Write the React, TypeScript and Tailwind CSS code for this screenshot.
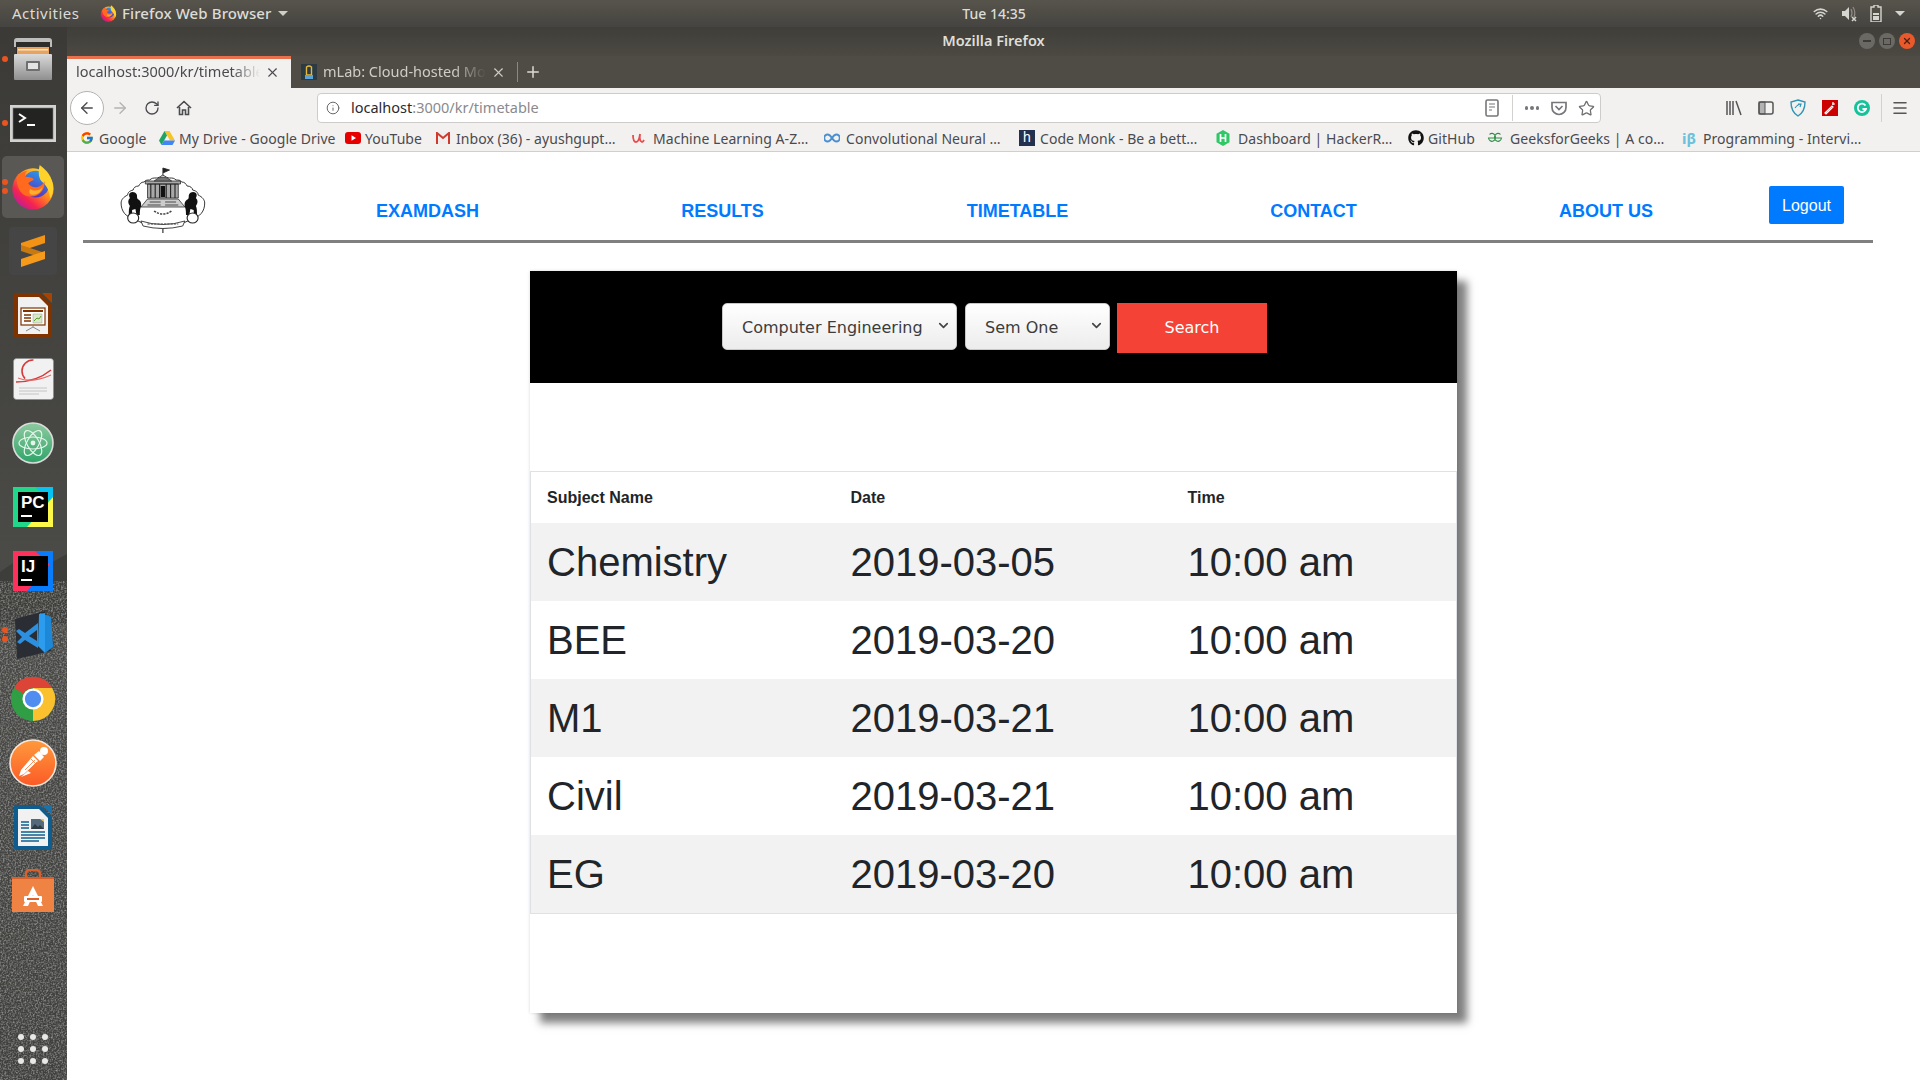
import React from "react";
import { ArrowLeft, ArrowRight, RotateCw, Info, X, Plus, ChevronDown, Star, Wifi, Menu } from "lucide-react";
import { FcGoogle } from "react-icons/fc";
import { FaGithub } from "react-icons/fa";

const Firefox = ({ s }: { s: number }) => (
  <svg width={s} height={s} viewBox="0 0 48 48">
    <defs>
      <linearGradient id="ffa" x1="0.9" y1="0.1" x2="0.2" y2="0.9">
        <stop offset="0" stopColor="#ffdf2e" />
        <stop offset="0.45" stopColor="#ff8a1c" />
        <stop offset="0.8" stopColor="#f5244f" />
        <stop offset="1" stopColor="#c91d8e" />
      </linearGradient>
      <linearGradient id="ffb" x1="0.7" y1="0" x2="0.3" y2="1">
        <stop offset="0" stopColor="#2a9be8" />
        <stop offset="1" stopColor="#5a2bc2" />
      </linearGradient>
    </defs>
    <circle cx="24" cy="26" r="21.5" fill="url(#ffa)" />
    <circle cx="27" cy="21" r="14" fill="url(#ffb)" />
    <path d="M31 1c7 5 14 13 14 24 0 5-1 8-3 11-1-7-3-13-8-17-4-3-5-10-3-18z" fill="#ffd12b" />
    <path d="M7 14c2-4 6-6 11-7-2 2-3 4-2 6 3 1 6 0 9 3-2 2-4 2-6 4 2 3 6 5 10 4 4-1 6-4 7-6 1 8-5 16-14 16-9 0-15-7-15-20z" fill="#ff6a1f" />
    <path d="M21 26c4 3 10 2 13-2-1 5-5 8-10 8-3 0-5-2-3-6z" fill="#ffb02a" />
  </svg>
);

const Cabinet = () => (
  <svg width="42" height="44" viewBox="0 0 42 44">
    <defs>
      <linearGradient id="cab" x1="0" y1="0" x2="0" y2="1">
        <stop offset="0" stopColor="#dadada" />
        <stop offset="1" stopColor="#8f8f8f" />
      </linearGradient>
    </defs>
    <path d="M2 4q0-3 3-3h32q3 0 3 3v6H2z" fill="#bdbdbd" />
    <rect x="4" y="5" width="34" height="12" fill="#2e2c2a" />
    <rect x="5" y="10" width="32" height="7" fill="#e8a25e" />
    <rect x="6" y="12" width="30" height="1.5" fill="#f7e4c8" />
    <rect x="2" y="17" width="38" height="26" rx="1" fill="url(#cab)" />
    <rect x="14" y="24" width="14" height="10" rx="1" fill="#6f6f6f" />
    <rect x="16" y="26" width="10" height="6" fill="#e4e4e4" />
  </svg>
);

const Terminal = () => (
  <svg width="46" height="37" viewBox="0 0 46 37">
    <rect width="46" height="37" fill="#d2d2d0" />
    <rect x="3" y="3" width="40" height="31" fill="#232322" stroke="#7c7c7c" strokeWidth="0.6" />
    <path d="M9 9l6 4-6 4" fill="none" stroke="#fff" strokeWidth="2" />
    <rect x="17" y="19" width="8" height="2" fill="#fff" />
  </svg>
);

const Sublime = () => (
  <div className="w-[48px] h-[48px] rounded-[4px] bg-[#454545] flex items-center justify-center">
    <svg width="24" height="32" viewBox="0 0 24 32">
      <path d="M24 0v8L0 16V8z" fill="#f39316" />
      <path d="M0 10l24 8v6L0 16z" fill="#c87a10" />
      <path d="M24 16v8L0 32v-8z" fill="#f59a1a" />
    </svg>
  </div>
);

const Office = ({ edge, corner, kind }: { edge: string; corner: string; kind: "impress" | "writer" }) => (
  <svg width="40" height="47" viewBox="0 0 40 47">
    <path d="M2 1h25l12 12v31q0 2-2 2H3q-2 0-2-2V2q0-1 1-1z" fill={edge} />
    <path d="M29 1h9q1 0 1 1v9z" fill={corner} />
    <path d="M5 5h21l9 9v28H5z" fill="#f1f1f1" />
    {kind === "impress" ? (
      <g>
        <rect x="8" y="16" width="24" height="17" fill="#fff" stroke={edge} strokeWidth="1.2" />
        <rect x="10" y="18" width="20" height="2" fill={edge} />
        <path d="M11 23h7M11 26h7M11 29h7" stroke={edge} strokeWidth="1.5" />
        <rect x="20" y="22" width="9" height="9" fill="#d9e8c9" stroke="#999" strokeWidth="0.5" />
        <path d="M21 29l3-3 2 1 2-3" stroke="#5a9a30" fill="none" />
        <path d="M20 33v2M13 39l7-4 7 4" stroke="#888" fill="none" />
      </g>
    ) : (
      <g>
        <path d="M8 18h8M8 21h8M8 24h8" stroke={edge} strokeWidth="1.6" />
        <rect x="18" y="15" width="13" height="10" fill="#53687a" />
        <path d="M18 25l4-5 3 3 2-2 4 4z" fill="#2e3a44" />
        <path d="M27 15h4v3z" fill="#e7c94a" />
        <path d="M8 28h24M8 31h24M8 34h24M8 37h18" stroke={edge} strokeWidth="1.6" />
      </g>
    )}
  </svg>
);

const Evince = () => (
  <svg width="41" height="42" viewBox="0 0 41 42">
    <rect x="0.5" y="0.5" width="40" height="41" rx="3" fill="#f1f1f1" stroke="#8a8a8a" strokeWidth="0.6" />
    <circle cx="20" cy="13" r="11" fill="none" stroke="#d43a3a" strokeWidth="1.6" strokeDasharray="26 40" strokeDashoffset="40" />
    <path d="M3 24c10 0 24-3 35-12" fill="none" stroke="#d43a3a" strokeWidth="1.6" />
    <path d="M5 20c10 4 22 2 33-3" fill="none" stroke="#e46a6a" strokeWidth="1.2" />
    <path d="M6 30h28M6 33h28M6 36h20" stroke="#c4c4c4" strokeWidth="1" />
  </svg>
);

const Atom = () => (
  <svg width="42" height="42" viewBox="0 0 42 42">
    <defs>
      <linearGradient id="atm" x1="0" y1="0" x2="0" y2="1">
        <stop offset="0" stopColor="#8ecaa0" />
        <stop offset="1" stopColor="#2fa468" />
      </linearGradient>
    </defs>
    <circle cx="21" cy="21" r="20" fill="url(#atm)" stroke="#dcdcdc" strokeWidth="1.6" />
    <g fill="none" stroke="#e6f5ea" strokeWidth="1.2">
      <ellipse cx="21" cy="21" rx="6" ry="14" transform="rotate(30 21 21)" />
      <ellipse cx="21" cy="21" rx="6" ry="14" transform="rotate(-30 21 21)" />
      <ellipse cx="21" cy="21" rx="6" ry="14" transform="rotate(90 21 21)" />
    </g>
    <circle cx="21" cy="21" r="2.4" fill="#e6f5ea" />
  </svg>
);

const JetBrains = ({ t, a, b, c }: { t: string; a: string; b: string; c: string }) => (
  <div className="relative w-[40px] h-[40px] overflow-hidden">
    <svg width="40" height="40" viewBox="0 0 40 40" className="absolute inset-0">
      <rect width="40" height="40" fill={a} />
      <path d="M22 0h18v16z" fill={b} />
      <path d="M40 10v30H14z" fill={c} />
    </svg>
    <div className="absolute left-[5px] top-[5px] w-[30px] h-[30px] bg-black">
      <div className="text-white font-bold text-[17px] leading-[17px] pl-[3px] pt-[2px] font-['Liberation_Sans',sans-serif]">{t}</div>
      <div className="w-[11px] h-[2px] bg-white ml-[3px] mt-[4px]" />
    </div>
  </div>
);

const VSCode = () => (
  <svg width="42" height="50" viewBox="0 0 42 50">
    <path d="M3 9l30-8 6 40-34 8z" fill="#2a2d33" />
    <path d="M28 3l11 4 2 30-8 6z" fill="#1e88d8" />
    <path d="M27 4l-1 32 7 7V3z" fill="#2c9cee" />
    <path d="M26 13l-13 10-6-4-3 2 6 6-5 5 3 2 5-4 13 8z M25 20v11l-8-5z" fill="#2d8fe0" fillRule="evenodd" />
  </svg>
);

const Chrome = () => (
  <svg width="46" height="46" viewBox="0 0 48 48">
    <circle cx="24" cy="24" r="23" fill="#2f9e44" />
    <path d="M24 47A23 23 0 0 0 44 12.5H24z M24 47l10-18-10-5z" fill="#fbc02d" />
    <path d="M4 12.5A23 23 0 0 1 44 12.5H24a11.500 11.500 0 0 0-10 6z" fill="#db4437" />
    <path d="M4 12.500L14 29l10-5-10-5.500z" fill="#2f9e44" />
    <circle cx="24" cy="24" r="11" fill="#fff" />
    <circle cx="24" cy="24" r="8.500" fill="#4f8ef0" />
  </svg>
);

const Postman = () => (
  <svg width="48" height="48" viewBox="0 0 48 48">
    <defs>
      <linearGradient id="pst" x1="0" y1="0" x2="0" y2="1">
        <stop offset="0" stopColor="#ff9a3c" />
        <stop offset="1" stopColor="#fb5a26" />
      </linearGradient>
    </defs>
    <circle cx="24" cy="24" r="23" fill="url(#pst)" stroke="#f6e8de" strokeWidth="1.600" />
    <path d="M10 37l5-2 14-13-5-5-12 14z" fill="#fff" />
    <path d="M12 38l10-4-3-2z" fill="#fff" />
    <circle cx="35" cy="12" r="4" fill="#fff" />
    <path d="M25 16l5-4 5 6-4 4z" fill="#fff" />
    <path d="M16 31l10-10M19 32l9-9M22 20l5 5" stroke="#f4793a" strokeWidth="0.800" />
  </svg>
);

const Bag = () => (
  <svg width="42" height="45" viewBox="0 0 42 45">
    <path d="M14 10V5q0-4 4-4h6q4 0 4 4v5" fill="none" stroke="#d8602a" strokeWidth="2.500" />
    <rect y="8" width="42" height="35" fill="#ee8343" />
    <rect y="8" width="42" height="2" fill="#d8602a" />
    <path d="M21 17l-10 20h5l5-11 5 11h5z" fill="#fff" />
    <rect x="12" y="27" width="18" height="6" rx="1" fill="#fff" />
    <rect x="15" y="29" width="12" height="2" fill="#e2612a" />
  </svg>
);

const Seal = () => (
  <svg width="88" height="66" viewBox="5 0 80 66" preserveAspectRatio="none">
    <path d="M44 8c3 2 4 3 6 3 3 0 4 0 6 2 2 0 4 0 5 2 3 0 4 2 5 4 3 0 5 2 5 4 4 1 5 3 5 5 4 2 6 5 6 8 0 8-4 14-12 16-8 5-18 9-26 9s-18-4-26-9C10 50 6 44 6 36c0-3 2-6 6-8 0-2 1-4 5-5 0-2 2-4 5-4 1-2 2-4 5-4 1-2 3-2 5-2 2-2 3-2 6-2 2 0 3-1 6-3z" fill="#fff" stroke="#2a2a2a" strokeWidth="0.9" />
    <path d="M44 8V1M44 1l6 2-6 3" stroke="#222" fill="#222" strokeWidth="0.800" />
    <path d="M28 14h32v3H28zM30 17h28v14H30z" fill="#a8a8a8" stroke="#222" strokeWidth="0.700" />
    <path d="M33 17v14M37 17v14M41 17v14M47 17v14M51 17v14M55 17v14" stroke="#222" strokeWidth="1" />
    <path d="M36 14q8-8 16 0z" fill="#777" stroke="#222" strokeWidth="0.600" />
    <path d="M42 19h4v11h-4z" fill="#111" />
    <path d="M30 32h28l6 8H24z" fill="#ccc" stroke="#222" strokeWidth="0.700" />
    <path d="M32 35h10M46 35h10M30 38h12M46 38h12" stroke="#333" strokeWidth="0.800" />
    <path d="M14 26c2-2 5-1 6 1 1 2 0 3 1 5 2 1 4 3 3 8-1 2-1 6-1 8h-3l-1-6-3 1v5h-3c0-4 0-7 1-9-2-3-2-6 0-8-1-2-1-4 0-5z" fill="#111" />
    <path d="M74 26c-2-2-5-1-6 1-1 2 0 3-1 5-2 1-4 3-3 8 1 2 1 6 1 8h3l1-6 3 1v5h3c0-4 0-7-1-9 2-3 2-6 0-8 1-2 1-4 0-5z" fill="#111" />
    <circle cx="17" cy="51" r="5" fill="#fff" stroke="#222" strokeWidth="1" />
    <circle cx="71" cy="51" r="5" fill="#fff" stroke="#222" strokeWidth="1" />
    <path d="M24 54q20 7 40 0l-2 5q-18 5-36 0z" fill="#fff" stroke="#222" strokeWidth="0.800" />
    <path d="M30 57h28" stroke="#444" strokeWidth="1.200" strokeDasharray="2 1" />
    <path d="M36 44q8 6 16 0" fill="none" stroke="#444" strokeWidth="1.500" strokeDasharray="2 1" />
    <path d="M44 62v4" stroke="#222" strokeWidth="1" />
  </svg>
);

const Drive = () => (
  <svg width="16" height="15" viewBox="0 0 16 15">
    <path d="M5.500 0h5l5.500 9.500h-5z" fill="#f7c325" />
    <path d="M5.500 0L0 9.500 2.500 14l5.500-9.500z" fill="#1fa463" />
    <path d="M5 9.500h11L13.500 14h-11z" fill="#4285f4" />
  </svg>
);
const YT = () => (
  <svg width="16" height="12" viewBox="0 0 16 12">
    <rect width="16" height="12" rx="3" fill="#e60000" />
    <path d="M6.500 3.200v5.600L11 6z" fill="#fff" />
  </svg>
);
const Gmail = () => (
  <svg width="14" height="12" viewBox="0 0 14 12">
    <rect width="14" height="12" fill="#eee" />
    <path d="M1 12V1l6 5 6-5v11" fill="none" stroke="#d0392e" strokeWidth="2" />
  </svg>
);
const Udemy = () => (
  <svg width="13" height="13" viewBox="0 0 13 13">
    <path d="M1 3q0 7 3 7 3 0 4-8M8 2q-1 7 2 8 1 0 2-2" fill="none" stroke="#e84c4c" strokeWidth="1.800" />
  </svg>
);
const Infinity2 = () => (
  <svg width="16" height="10" viewBox="0 0 16 10">
    <path d="M8 5C6 2 5 1.500 3.700 1.500a3.500 3.500 0 0 0 0 7C5 8.500 6 8 8 5c2-3 3-3.500 4.300-3.500a3.500 3.500 0 0 1 0 7C11 8.500 10 8 8 5z" fill="none" stroke="#4a8fd0" strokeWidth="2" />
  </svg>
);
const CM = () => (
  <div className="w-[16px] h-[16px] bg-[#23304f] text-white text-[14px] leading-[14px] text-center font-['Liberation_Sans',sans-serif]">h</div>
);
const HR = () => (
  <svg width="16" height="16" viewBox="0 0 16 16">
    <path d="M8 0l6.500 3.700v8.600L8 16l-6.500-3.700V3.700z" fill="#2ec866" />
    <path d="M5.500 4v8M10.500 4v8M5.500 8h5" stroke="#fff" strokeWidth="1.700" />
  </svg>
);
const GFG = () => (
  <svg width="16" height="12" viewBox="0 0 16 12">
    <path d="M8 6H1.500a3.500 4 0 1 0 1-3.500M8 6h6.500a3.500 4 0 1 1-1-3.500" fill="none" stroke="#2f8d46" strokeWidth="1.100" />
  </svg>
);
const IB = () => <span className="text-[#6cc0dc] text-[15px] font-bold w-[16px] font-['Noto_Sans',sans-serif]">iβ</span>;

const bookmarks = [
  { w: "w-[79px]", icon: <FcGoogle size={14} />, t: "Google", g: "gap-[5px]" },
  { w: "w-[186px]", icon: <Drive />, t: "My Drive - Google Drive", g: "gap-[4px]" },
  { w: "w-[91px]", icon: <YT />, t: "YouTube", g: "gap-[4px]" },
  { w: "w-[196px]", icon: <Gmail />, t: "Inbox (36) - ayushgupt…", g: "gap-[6px]" },
  { w: "w-[192px]", icon: <Udemy />, t: "Machine Learning A-Z…", g: "gap-[8px]" },
  { w: "w-[195px]", icon: <Infinity2 />, t: "Convolutional Neural …", g: "gap-[6px]" },
  { w: "w-[196px]", icon: <CM />, t: "Code Monk - Be a bett…", g: "gap-[5px]" },
  { w: "w-[193px]", icon: <HR />, t: "Dashboard | HackerR…", g: "gap-[7px]" },
  { w: "w-[79px]", icon: <FaGithub size={16} color="#111" />, t: "GitHub", g: "gap-[4px]" },
  { w: "w-[195px]", icon: <GFG />, t: "GeeksforGeeks | A co…", g: "gap-[7px]" },
  { w: "w-[190px]", icon: <IB />, t: "Programming - Intervi…", g: "gap-[5px]" },
];

const dock: { el: React.ReactNode; dots?: number; active?: boolean }[] = [
  { el: <Cabinet />, dots: 1 },
  { el: <Terminal />, dots: 1 },
  { el: <Firefox s={46} />, dots: 2, active: true },
  { el: <Sublime /> },
  { el: <Office edge="#7f3300" corner="#a84400" kind="impress" /> },
  { el: <Evince /> },
  { el: <Atom /> },
  { el: <JetBrains t="PC" a="#21d789" b="#07c3f2" c="#fcf84a" /> },
  { el: <JetBrains t="IJ" a="#fe315d" b="#087cfa" c="#087cfa" /> },
  { el: <VSCode />, dots: 2 },
  { el: <Chrome /> },
  { el: <Postman /> },
  { el: <Office edge="#0f5d8f" corner="#1a72ab" kind="writer" /> },
  { el: <Bag /> },
];

const rows = [
  ["Chemistry", "2019-03-05", "10:00 am"],
  ["BEE", "2019-03-20", "10:00 am"],
  ["M1", "2019-03-21", "10:00 am"],
  ["Civil", "2019-03-21", "10:00 am"],
  ["EG", "2019-03-20", "10:00 am"],
];

const nav = [
  { t: "EXAMDASH", w: "w-[295px]" },
  { t: "RESULTS", w: "w-[295px]" },
  { t: "TIMETABLE", w: "w-[295px]" },
  { t: "CONTACT", w: "w-[297px]" },
  { t: "ABOUT US", w: "w-[288px]" },
];

const ui = "font-['Noto_Sans',sans-serif]";

export default function App() {
  return (
    <div className="w-[1920px] h-[1080px] overflow-hidden bg-white flex flex-col font-['Liberation_Sans',sans-serif]">
      {/* GNOME top bar */}
      <div className={`h-[27px] shrink-0 flex items-center bg-gradient-to-b from-[#57544c] to-[#464440] text-[15px] text-[#dcdcd6] ${ui}`}>
        <div className="w-[954px] flex items-center pl-[12px]">
          <span className="w-[88px] tracking-[0.500px]">Activities</span>
          <Firefox s={17} />
          <span className="ml-[5px] font-medium tracking-[0.100px]">Firefox Web Browser</span>
          <span className="ml-[6px] w-0 h-0 border-x-[5px] border-x-transparent border-t-[5px] border-t-[#cfcfc8]" />
        </div>
        <div className="w-[80px] text-center text-[14px] font-medium">Tue 14:35</div>
        <div className="flex-1 flex items-center justify-end pr-[15px] gap-[13px] text-[#d5d5cf]">
          <Wifi size={15} strokeWidth={2.500} />
          <svg width="16" height="17" viewBox="0 0 16 17">
            <path d="M1 6h3l4-4v13l-4-4H1z" fill="#d5d5cf" />
            <path d="M10 4q2 4 0 8M12 2q3 5 1 10" fill="none" stroke="#8f8d86" strokeWidth="1.200" />
            <path d="M11 12l4 4M15 12l-4 4" stroke="#d5d5cf" strokeWidth="1.500" />
          </svg>
          <svg width="12" height="17" viewBox="0 0 12 17">
            <path d="M4 0h4v2h3v15H1V2h3z" fill="none" stroke="#d5d5cf" strokeWidth="1.400" />
            <rect x="3" y="8" width="6" height="2" fill="#d5d5cf" />
            <rect x="3" y="11" width="6" height="4" fill="#d5d5cf" />
          </svg>
          <span className="w-0 h-0 border-x-[5px] border-x-transparent border-t-[5px] border-t-[#d5d5cf]" />
        </div>
      </div>

      <div className="flex-1 flex min-h-0">
        {/* Dock */}
        <div className="relative w-[67px] shrink-0 flex flex-col bg-gradient-to-b from-[#3b3a37] via-[#4a4a47] to-[#3f3f3d] overflow-hidden">
          <svg className="absolute left-0 top-[500px]" width="67" height="553" viewBox="0 0 67 553">
            <filter id="nz">
              <feTurbulence type="fractalNoise" baseFrequency="0.6" numOctaves="2" />
              <feColorMatrix values="0 0 0 0 0.5 0 0 0 0 0.5 0 0 0 0 0.5 0 0 0 1.400 -0.550" />
            </filter>
            <path d="M0 45l20-14 25 8 22-12v70H0z" fill="#33332f" opacity="0.55" />
            <rect y="100" width="67" height="453" filter="url(#nz)" />
          </svg>
          {dock.map((d, i) => (
            <div key={i} className="relative h-[64px] shrink-0 flex items-center justify-center pr-[1px]">
              {d.active && <div className="absolute left-[2px] top-[1px] w-[62px] h-[62px] rounded-[5px] bg-[#5a5855]" />}
              <div className="relative flex items-center justify-center">{d.el}</div>
              {d.dots === 1 && <span className="absolute left-[2px] top-[29px] w-[6px] h-[6px] rounded-full bg-[#e95420]" />}
              {d.dots === 2 && (
                <>
                  <span className="absolute left-[2px] top-[24px] w-[6px] h-[6px] rounded-full bg-[#e95420]" />
                  <span className="absolute left-[2px] top-[33px] w-[6px] h-[6px] rounded-full bg-[#e95420]" />
                </>
              )}
            </div>
          ))}
          <div className="relative mt-auto mb-[16px] ml-[18px] w-[30px] grid grid-cols-3 gap-[6px]">
            {Array.from({ length: 9 }).map((_, i) => (
              <span key={i} className="w-[6px] h-[6px] rounded-full bg-[#e8e8e6]" />
            ))}
          </div>
        </div>

        {/* Window */}
        <div className="flex-1 flex flex-col min-w-0">
          <div className={`h-[29px] shrink-0 flex items-center pb-[2px] bg-gradient-to-b from-[#403e39] to-[#4b4942] text-[14.500px] font-semibold text-[#dfdfd9] ${ui} relative`}>
            <div className="flex-1 text-center">Mozilla Firefox</div>
            <div className="absolute right-[5px] top-[6px] flex gap-[4px]">
              <span className="w-[16px] h-[16px] rounded-full bg-[#6b6963] flex items-center justify-center"><span className="w-[8px] h-[2px] bg-[#3c3b37]" /></span>
              <span className="w-[16px] h-[16px] rounded-full bg-[#6b6963] flex items-center justify-center"><span className="w-[8px] h-[7px] border border-[#3c3b37]" /></span>
              <span className="w-[16px] h-[16px] rounded-full bg-[#e9592b] flex items-center justify-center"><X size={10} color="#4a2010" strokeWidth={3} /></span>
            </div>
          </div>
          {/* Tabs */}
          <div className={`h-[32px] shrink-0 flex items-stretch bg-[#4f4c45] text-[14.500px] ${ui}`}>
            <div className="w-[224px] bg-[#f2f1f0] border-t-[3px] border-[#e9704d] flex items-center pl-[9px] pr-[11px] pb-[3px] text-[#4a4a4f]">
              <span className="flex-1 whitespace-nowrap overflow-hidden [mask-image:linear-gradient(to_right,black_85%,transparent)]">localhost:3000/kr/timetable</span>
              <X size={15} className="ml-[5px] shrink-0" strokeWidth={1.800} />
            </div>
            <div className="w-[226px] flex items-center pl-[10px] pr-[11px] text-[#cfcdc6]">
              <svg width="16" height="16" viewBox="0 0 16 16" className="shrink-0">
                <rect width="16" height="16" fill="#2c3a44" />
                <path d="M5.500 3q2.500-2 5 0v8h-5z" fill="none" stroke="#e5b83a" strokeWidth="1.400" />
                <rect x="4" y="11" width="8" height="4" fill="#5ba3d6" />
              </svg>
              <span className="ml-[6px] flex-1 whitespace-nowrap overflow-hidden [mask-image:linear-gradient(to_right,black_80%,transparent)]">mLab: Cloud-hosted MongoDB</span>
              <X size={15} className="ml-[5px] shrink-0" strokeWidth={1.800} />
            </div>
            <div className="w-px my-[6px] bg-[#8a8880]" />
            <div className="flex items-center pl-[6px] text-[#dcdad4]"><Plus size={18} /></div>
          </div>
          {/* Toolbar */}
          <div className="relative z-10 h-[35px] shrink-0 pt-[5px] flex items-center bg-[#f2f1f0] text-[#4a4a4f]">
            <div className="w-[34px] h-[34px] rounded-full border border-[#b5b3b0] bg-white flex items-center justify-center shrink-0 ml-[3px]">
              <ArrowLeft size={18} strokeWidth={1.800} />
            </div>
            <ArrowRight size={18} strokeWidth={1.800} className="ml-[7px] text-[#b4b3b1]" />
            <RotateCw size={16} strokeWidth={2} className="ml-[15px]" />
            <svg width="16" height="16" viewBox="0 0 16 16" className="ml-[16px]">
              <path d="M1 8l7-6.500L15 8M3.500 7v7.500h3V10h3v4.500h3V7" fill="none" stroke="#4a4a4f" strokeWidth="1.600" />
            </svg>
            <div className={`ml-[125px] w-[1284px] h-[30px] shrink-0 bg-white border border-[#cdccca] rounded-[4px] flex items-center text-[14.500px] ${ui}`}>
              <Info size={14} className="ml-[8px] shrink-0" strokeWidth={1.700} color="#666" />
              <span className="ml-[11px] text-[#2a2a2e]">localhost</span>
              <span className="text-[#8a8a8c]">:3000/kr/timetable</span>
              <div className="ml-auto flex items-center">
                <svg width="14" height="18" viewBox="0 0 14 18">
                  <rect x="1" y="1" width="12" height="16" rx="1.500" fill="none" stroke="#77767a" strokeWidth="1.600" />
                  <path d="M4 5h6M4 8h6M4 11h3" stroke="#77767a" strokeWidth="1.200" />
                </svg>
                <div className="w-px h-[26px] bg-[#d2d1cf] ml-[13px]" />
                <span className="ml-[12px] flex gap-[2px]">
                  <span className="w-[3.500px] h-[3.500px] rounded-full bg-[#77767a]" />
                  <span className="w-[3.500px] h-[3.500px] rounded-full bg-[#77767a]" />
                  <span className="w-[3.500px] h-[3.500px] rounded-full bg-[#77767a]" />
                </span>
                <svg width="16" height="15" viewBox="0 0 16 15" className="ml-[12px]">
                  <path d="M1 1.500h14v5a7 7 0 0 1-14 0z" fill="none" stroke="#77767a" strokeWidth="1.700" />
                  <path d="M4.500 5L8 8.500 11.500 5" fill="none" stroke="#77767a" strokeWidth="1.700" />
                </svg>
                <Star size={17} className="ml-[11px] mr-[5px]" strokeWidth={1.800} color="#6f6e72" />
              </div>
            </div>
            <div className="flex items-center ml-[125px]">
              <svg width="16" height="16" viewBox="0 0 16 16">
                <path d="M1 1v14M4 1v14M7 1v14M10 1l5 14" stroke="#555" strokeWidth="1.500" />
              </svg>
              <svg width="16" height="14" viewBox="0 0 16 14" className="ml-[16px]">
                <rect x="1" y="1" width="14" height="12" rx="2" fill="none" stroke="#555" strokeWidth="1.500" />
                <rect x="1" y="1" width="6" height="12" fill="#555" fillOpacity="0.4" stroke="#555" />
              </svg>
              <svg width="16" height="18" viewBox="0 0 16 18" className="ml-[16px]">
                <path d="M8 1l7 2c0 7-2 11-7 14C3 14 1 10 1 3z" fill="none" stroke="#2f94b5" strokeWidth="1.400" />
                <path d="M5 9q3-4 6-4M8 5l3 0-1 3" fill="none" stroke="#2f94b5" strokeWidth="1.200" />
              </svg>
              <svg width="16" height="16" viewBox="0 0 16 16" className="ml-[16px]">
                <rect width="16" height="16" fill="#cc0000" />
                <path d="M3 13l7-7 1 1-7 7zM11 2v3M13 4h-3" stroke="#fff" strokeWidth="1.200" />
              </svg>
              <svg width="16" height="16" viewBox="0 0 16 16" className="ml-[16px]">
                <circle cx="8" cy="8" r="8" fill="#15c39a" />
                <path d="M11.500 5.500A4.200 4.200 0 1 0 12 9H8.500" fill="none" stroke="#fff" strokeWidth="1.800" />
              </svg>
              <div className="w-px h-[28px] bg-[#d2d1cf] ml-[11px]" />
              <Menu size={18} className="ml-[9px]" strokeWidth={2} color="#555" />
            </div>
          </div>
          {/* Bookmarks */}
          <div className={`h-[29px] shrink-0 flex items-center pt-[2px] bg-[#f2f1f0] border-b border-[#d0cfcd] pl-[13px] text-[14px] text-[#4a4a4f] ${ui}`}>
            {bookmarks.map((b, i) => (
              <div key={i} className={`${b.w} shrink-0 flex items-center ${b.g} whitespace-nowrap overflow-hidden`}>
                <span className="shrink-0 flex items-center">{b.icon}</span>
                <span className="tracking-[0.050px]">{b.t}</span>
              </div>
            ))}
          </div>
          {/* Page */}
          <div className="flex-1 min-h-0 bg-white">
            <div className="ml-[16px] mr-[47px] h-[91px] border-b-[3px] border-[#808080] flex items-start">
              <div className="ml-[37px] mt-[15px] w-[160px] shrink-0"><Seal /></div>
              <div className="flex mt-[49px] shrink-0">
                {nav.map((n) => (
                  <div key={n.t} className={`${n.w} text-center text-[18px] leading-[20px] font-bold text-[#007bff]`}>{n.t}</div>
                ))}
              </div>
              <button className="mt-[34px] ml-[19px] w-[75px] h-[38px] pt-[1px] bg-[#007bff] text-white text-[16px] rounded-[2px]">Logout</button>
            </div>
            <div className="mx-auto mt-[28px] w-[927px] h-[742px] bg-white shadow-[10px_10px_8px_rgba(0,0,0,0.5),0_0_3px_rgba(0,0,0,0.15)]">
              <div className="h-[112px] bg-black flex items-center justify-center font-['DejaVu_Sans',sans-serif] text-[16px] pl-[2px]">
                <div className="relative w-[235px] h-[47px] mb-[1px]">
                  <select defaultValue="ce" className="w-full h-full appearance-none rounded-[5px] border border-[#c8c8c8] bg-gradient-to-b from-white to-[#ececec] pl-[19px] pt-[3px] text-[#3c3c3c]">
                    <option value="ce">Computer Engineering</option>
                  </select>
                  <ChevronDown size={15} strokeWidth={2.600} className="absolute right-[6px] top-[15px] text-[#444]" />
                </div>
                <div className="relative w-[145px] h-[47px] ml-[8px] mb-[1px]">
                  <select defaultValue="1" className="w-full h-full appearance-none rounded-[5px] border border-[#c8c8c8] bg-gradient-to-b from-white to-[#ececec] pl-[19px] pt-[3px] text-[#3c3c3c]">
                    <option value="1">Sem One</option>
                  </select>
                  <ChevronDown size={15} strokeWidth={2.600} className="absolute right-[6px] top-[15px] text-[#444]" />
                </div>
                <button className="w-[150px] h-[50px] ml-[7px] mt-[2px] bg-[#f44336] text-white">Search</button>
              </div>
              <table className="mt-[88px] w-full border-collapse border border-[#dee2e6] text-[#212529]">
                <thead>
                  <tr className="h-[51px] text-left text-[16px]">
                    <th className="w-[304px] pl-[16px] pt-[2px] font-bold">Subject Name</th>
                    <th className="w-[337px] pl-[16px] pt-[2px] font-bold">Date</th>
                    <th className="pl-[16px] pt-[2px] font-bold">Time</th>
                  </tr>
                </thead>
                <tbody>
                  {rows.map((r, i) => (
                    <tr key={i} className={`${i === 4 ? "h-[79px]" : "h-[78px]"} text-[40px] ${i % 2 === 0 ? "bg-[#f2f2f2]" : "bg-white"}`}>
                      {r.map((c, j) => (
                        <td key={j} className="pl-[16px]">{c}</td>
                      ))}
                    </tr>
                  ))}
                </tbody>
              </table>
            </div>
          </div>
        </div>
      </div>
    </div>
  );
}
